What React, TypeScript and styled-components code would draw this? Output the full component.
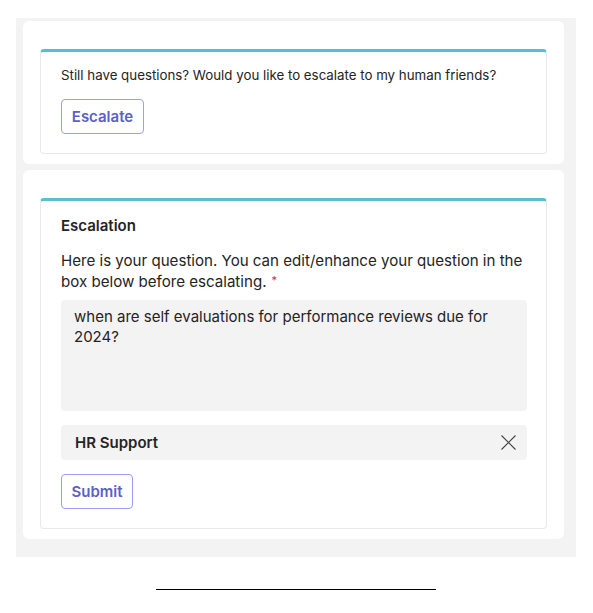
import { createGlobalStyle } from "styled-components";
import styled from "styled-components";

const GlobalStyle = createGlobalStyle`
  body {
    margin: 0;
    background: #ffffff;
    font-family: "Inter", "Noto Sans", sans-serif;
    color: #242424;
  }
`;

const Page = styled.div`
  padding: 18px 0 0 16px;
  display: flex;
  flex-direction: column;
  align-items: flex-start;
`;

const Panel = styled.div`
  width: 560px;
  box-sizing: border-box;
  background: #f3f3f3;
  padding: 3px 12px 18px 7px;
  display: flex;
  flex-direction: column;
  gap: 6px;
`;

const Card = styled.div`
  background: #ffffff;
  border-radius: 6px;
  padding: 28px 17px 10px;
`;

const Inner = styled.div`
  border: 1px solid #e9e9e9;
  border-top: 3px solid #5bbdd0;
  border-radius: 4px;
  padding: 0 19px 19px 20px;
  display: flex;
  flex-direction: column;
`;

const Prompt = styled.p`
  margin: 14px 0 0;
  font-size: 13.3px;
  line-height: 18px;
  color: #242424;
`;

const Title = styled.h3`
  margin: 15px 0 0;
  font-size: 15px;
  line-height: 20px;
  font-weight: 600;
`;

const Label = styled.p`
  margin: 14px 0 0;
  font-size: 15.1px;
  line-height: 21px;
`;

const Required = styled.span`
  color: #c4314b;
  font-size: 11px;
  line-height: 1;
  position: relative;
  top: -3px;
  margin-left: 5px;
`;

const QuestionBox = styled.div`
  margin-top: 8px;
  height: 111px;
  box-sizing: border-box;
  background: #f3f3f3;
  border-radius: 4px;
  padding: 7px 14px 7px 13px;
  font-size: 15px;
  line-height: 20px;
`;

const PickedRow = styled.div`
  margin-top: 14px;
  height: 35px;
  background: #f3f3f3;
  border-radius: 4px;
  display: flex;
  align-items: center;
  justify-content: space-between;
  padding: 0 10px 0 14px;
  font-size: 15px;
  font-weight: 600;
`;

const Clear = styled.span`
  display: flex;
  color: #424242;
`;

const Button = styled.button<{ $top: number; $width: number }>`
  margin-top: ${(p) => p.$top}px;
  align-self: flex-start;
  width: ${(p) => p.$width}px;
  height: 35px;
  background: #ffffff;
  border: 1px solid #9a9ef5;
  border-radius: 4px;
  color: #5b5fc7;
  font-family: "Inter", "Noto Sans", sans-serif;
  font-size: 15px;
  font-weight: 600;
  padding: 0;
  cursor: pointer;
`;

const Rule = styled.div`
  margin: 32px 0 0 140px;
  width: 280px;
  height: 1px;
  background: #000000;
`;

export default function App() {
  return (
    <>
      <GlobalStyle />
      <Page>
        <Panel>
          <Card>
            <Inner>
              <Prompt>
                Still have questions? Would you like to escalate to my human friends?
              </Prompt>
              <Button $top={15} $width={83}>
                Escalate
              </Button>
            </Inner>
          </Card>
          <Card>
            <Inner>
              <Title>Escalation</Title>
              <Label>
                Here is your question. You can edit/enhance your question in the box below before
                escalating.
                <Required>*</Required>
              </Label>
              <QuestionBox>when are self evaluations for performance reviews due for 2024?</QuestionBox>
              <PickedRow>
                HR Support
                <Clear>
                  <svg width="17" height="17" viewBox="0 0 17 17" fill="none">
                    <path d="M1.5 1.5L15.5 15.5M15.5 1.5L1.5 15.5" stroke="currentColor" strokeWidth="1.1" />
                  </svg>
                </Clear>
              </PickedRow>
              <Button $top={14} $width={72}>
                Submit
              </Button>
            </Inner>
          </Card>
        </Panel>
        <Rule />
      </Page>
    </>
  );
}
